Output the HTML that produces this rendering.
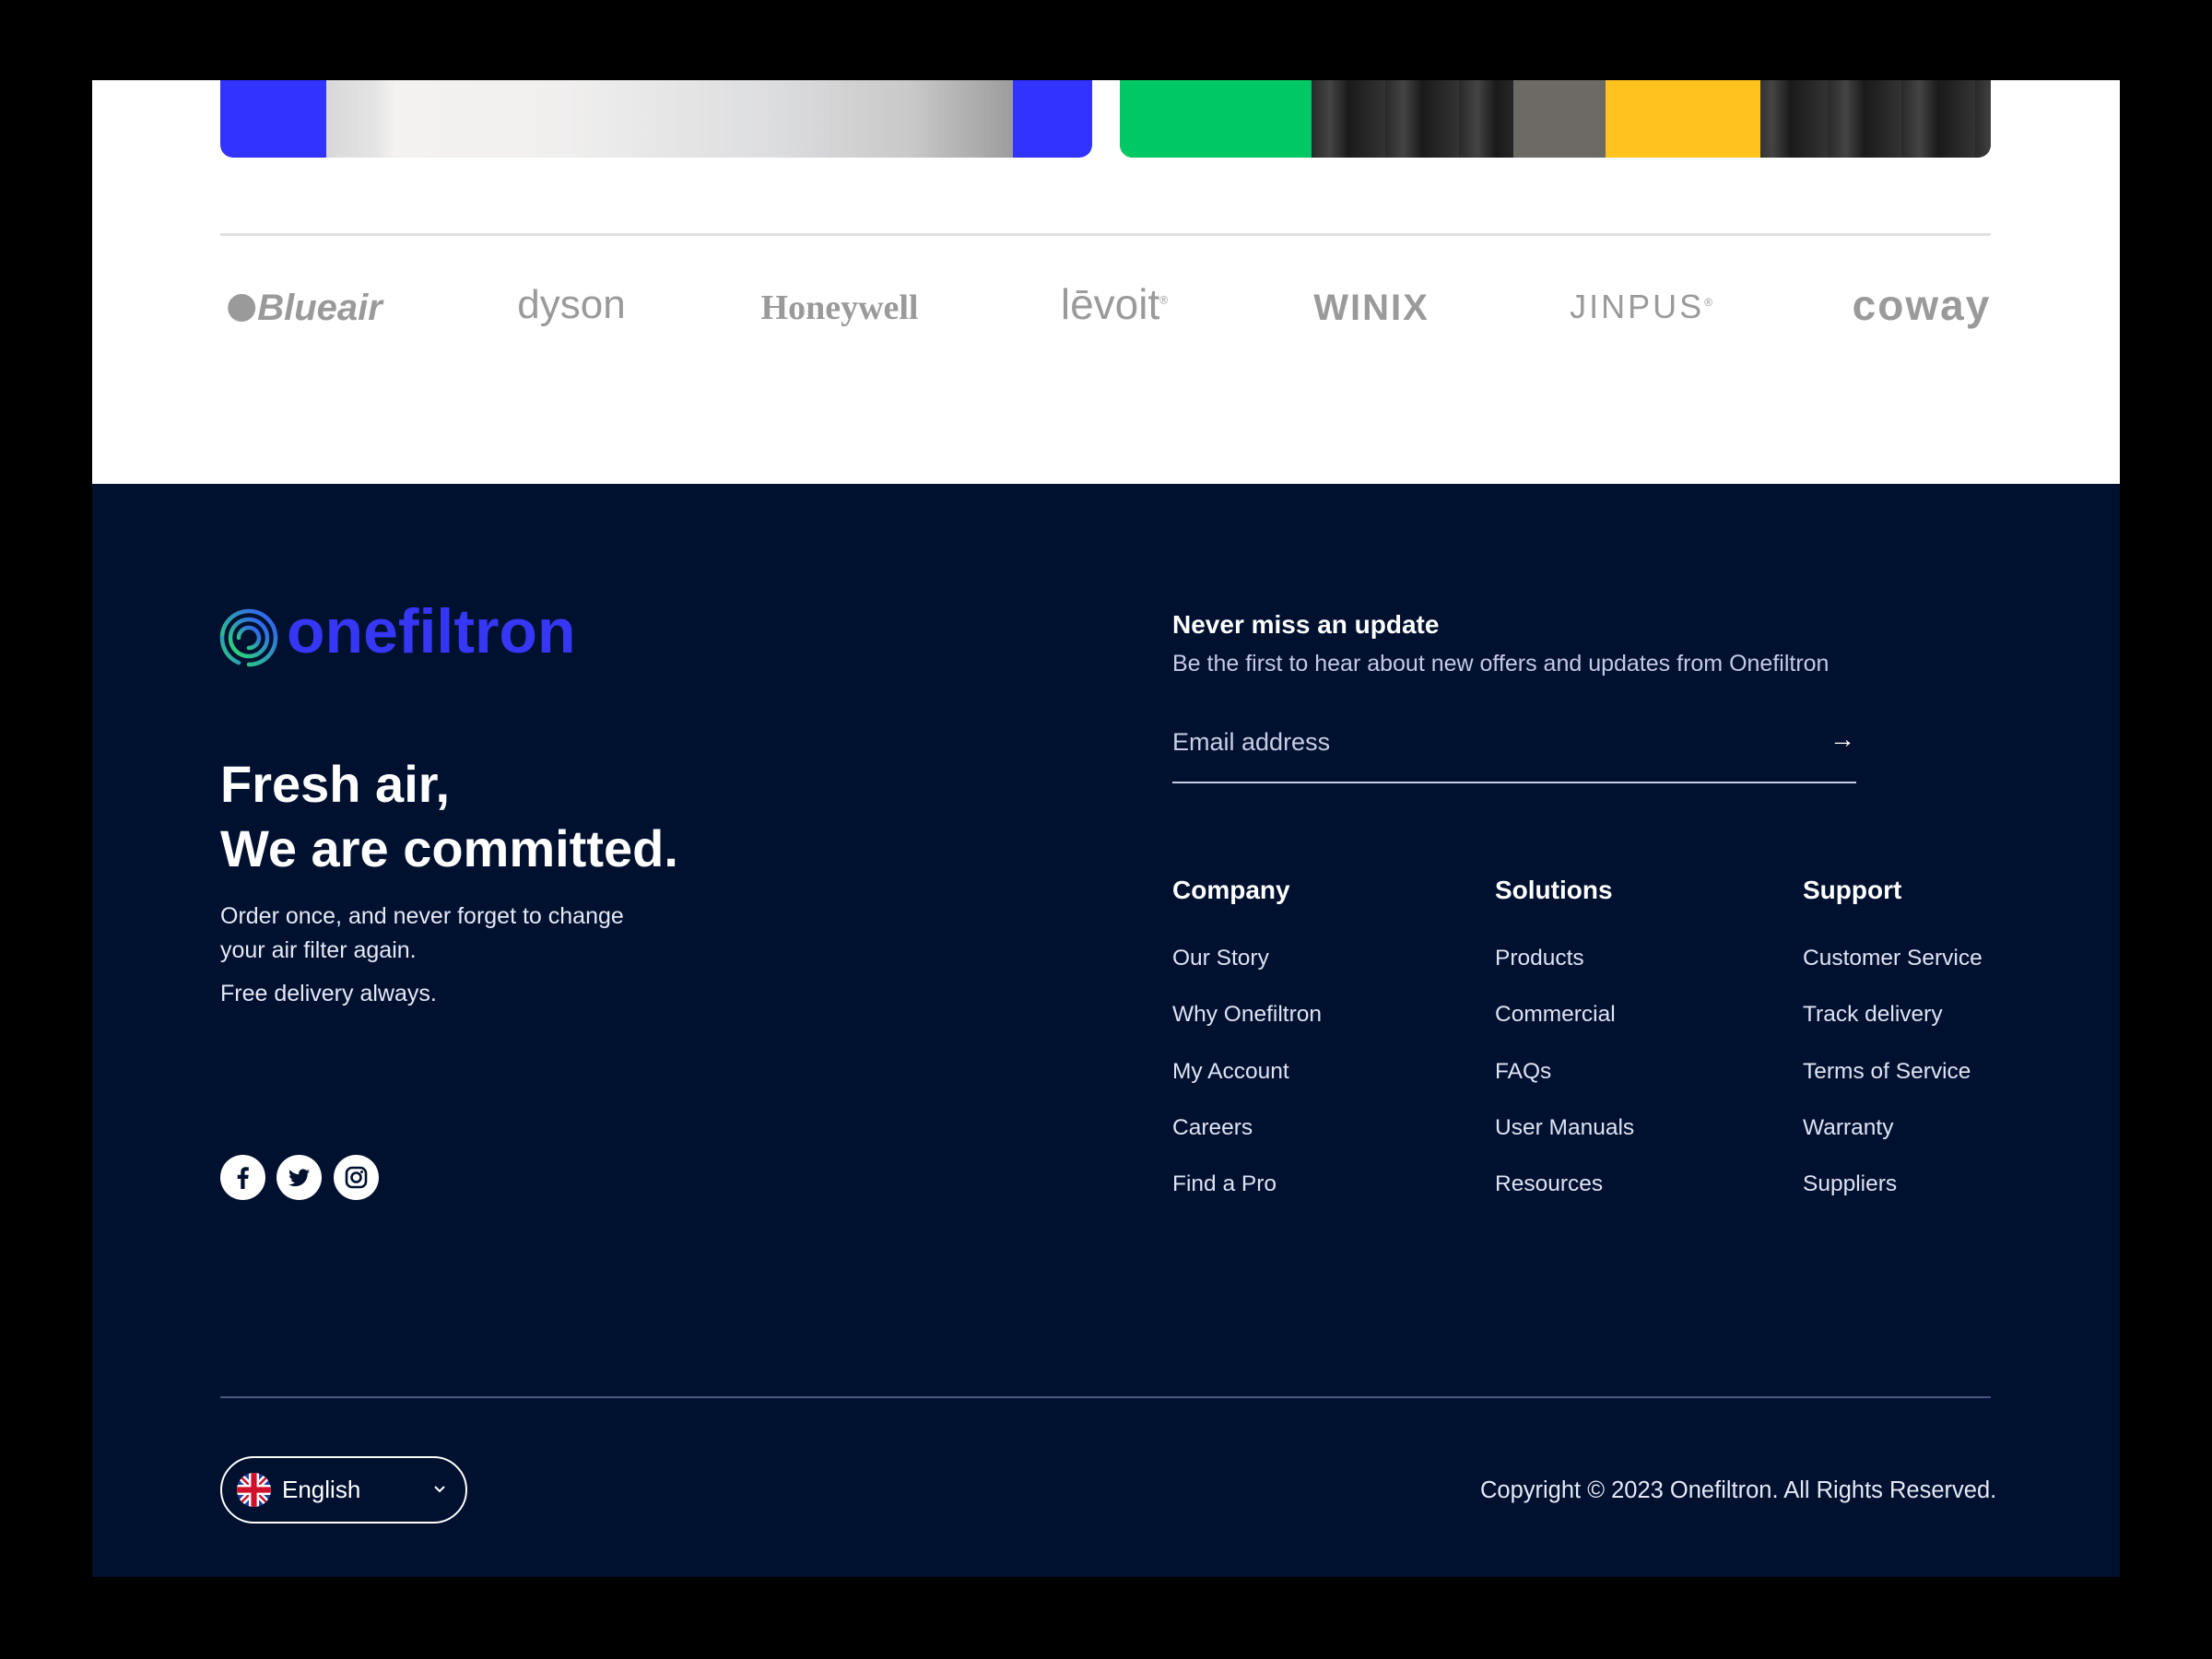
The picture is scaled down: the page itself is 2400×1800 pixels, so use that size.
<!DOCTYPE html>
<html><head><meta charset="utf-8"><style>
*{margin:0;padding:0;box-sizing:border-box}
body{width:2400px;height:1800px;background:#000;position:relative;overflow:hidden;font-family:"Liberation Sans",sans-serif}
.a{position:absolute}
.white{left:100px;top:87px;width:2200px;height:438px;background:#fff}
.foot{left:100px;top:525px;width:2200px;height:1186px;background:#00112f}
.logo{color:#9a9a9a;font-weight:bold;top:312px;font-size:40px;transform:translateX(-50%);white-space:nowrap}
.t{color:#fff;white-space:nowrap}
.lk{color:#dfe2f5;font-size:24.5px;white-space:nowrap}
.h{color:#fff;font-size:28px;font-weight:bold;white-space:nowrap}
.soc{width:49px;height:49px;border-radius:50%;background:#fff;top:1253px}
</style></head><body>
<div class="a white"></div>
<div class="a" style="left:239px;top:87px;width:946px;height:84px;background:#3333ff;border-radius:0 0 14px 14px;overflow:hidden">
 <div class="a" style="left:115px;top:0;width:745px;height:84px;background:linear-gradient(90deg,#d8d8d8 0,#e4e4e4 7%,#f4f2f0 10%,#f0efee 35%,#dcdddf 65%,#c9c9c9 85%,#9d9d9d 100%)"></div>
</div>
<div class="a" style="left:1215px;top:87px;width:945px;height:84px;background:#3a3a3a;border-radius:0 0 14px 14px;overflow:hidden">
 <div class="a" style="left:0;top:0;width:208px;height:84px;background:#00c864"></div>
 <div class="a" style="left:208px;top:0;width:737px;height:84px;background:repeating-linear-gradient(90deg,#2a2a2a 0,#444 20px,#1a1a1a 40px,#333 80px)"></div>
 <div class="a" style="left:427px;top:0;width:100px;height:84px;background:#6d6a66"></div>
 <div class="a" style="left:527px;top:0;width:168px;height:84px;background:#ffc21f"></div>
</div>
<div class="a" style="left:239px;top:253px;width:1921px;height:3px;background:#e0e0e0"></div>
<div class="a logo" style="left:331px;font-style:italic"><span style="display:inline-block;width:30px;height:30px;border-radius:50%;background:#9a9a9a;vertical-align:-2px;margin-right:2px"></span>Blueair</div>
<div class="a logo" style="left:620px;font-weight:normal;font-size:44px;top:306px">dyson</div>
<div class="a logo" style="left:911px;font-family:'Liberation Serif',serif;font-size:38px">Honeywell</div>
<div class="a logo" style="left:1209px;font-weight:normal;font-size:46px;top:303px">lēvoit<sup style="font-size:12px">®</sup></div>
<div class="a logo" style="left:1488px;font-size:40px;letter-spacing:2px">WINIX</div>
<div class="a logo" style="left:1782px;font-weight:normal;font-size:36px;letter-spacing:3px">JINPUS<sup style="font-size:12px">®</sup></div>
<div class="a logo" style="left:2085px;font-size:46px;top:304px;letter-spacing:2px">coway</div>

<div class="a foot"></div>
<svg class="a" style="left:237px;top:659px" width="66" height="66" viewBox="0 0 66 66"><defs><linearGradient id="g" x1="0" y1="1" x2="1" y2="0"><stop offset="0" stop-color="#2be36a"/><stop offset="1" stop-color="#3355ff"/></linearGradient></defs><g fill="none" stroke="url(#g)" stroke-width="4.5" stroke-linecap="round"><path d="M33 62A29 29 0 1 0 4 33"/><path d="M4 33A29 29 0 0 0 22 60"/><path d="M33 53A20 20 0 1 0 13 33A20 20 0 0 0 33 53"/><path d="M33 44A11 11 0 1 0 22 33"/></g></svg>
<div class="a" style="left:311px;top:646px;font-size:68px;font-weight:bold;color:#3636f5">onefiltron</div>
<div class="a t" style="left:239px;top:816px;font-size:56px;font-weight:bold;line-height:70px">Fresh air,<br>We are committed.</div>
<div class="a lk" style="left:239px;top:976px;line-height:37px;color:#e6e8f7;font-size:25px">Order once, and never forget to change<br>your air filter again.</div>
<div class="a lk" style="left:239px;top:1064px;color:#e6e8f7;font-size:25px">Free delivery always.</div>
<div class="a soc" style="left:239px"><svg width="49" height="49" viewBox="0 0 49 49"><path d="M26.5 37V26h3.6l.6-4.2h-4.2v-2.6c0-1.2.4-2 2.1-2h2.2v-3.8c-.4 0-1.7-.2-3.2-.2-3.2 0-5.3 1.9-5.3 5.5v3.1h-3.6V26h3.6v11z" fill="#00112f"/></svg></div>
<div class="a soc" style="left:300px"><svg width="49" height="49" viewBox="0 0 49 49"><path d="M36 17.5c-.9.4-1.8.6-2.7.8 1-.6 1.7-1.5 2-2.6-.9.6-2 1-3 1.2a4.7 4.7 0 0 0-8 4.3c-3.9-.2-7.4-2.1-9.7-4.9-1.3 2.200-.6 4.9 1.5 6.3-.8 0-1.5-.2-2.1-.6 0 2.3 1.6 4.2 3.8 4.6-.7.2-1.4.2-2.1.1.6 1.9 2.4 3.2 4.4 3.3-2 1.6-4.4 2.300-7 2 2.1 1.4 4.6 2.1 7.2 2.1 8.8 0 13.6-7.4 13.4-14 .9-.7 1.7-1.5 2.3-2.6z" fill="#00112f"/></svg></div>
<div class="a soc" style="left:362px"><svg width="49" height="49" viewBox="0 0 49 49"><rect x="14" y="14" width="21" height="21" rx="6" fill="none" stroke="#00112f" stroke-width="2.6"/><circle cx="24.5" cy="24.5" r="5" fill="none" stroke="#00112f" stroke-width="2.6"/><circle cx="30.5" cy="18.5" r="1.5" fill="#00112f"/></svg></div>
<div class="a h" style="left:1272px;top:662px">Never miss an update</div>
<div class="a lk" style="left:1272px;top:706px;color:#c5c9e6;font-size:25px">Be the first to hear about new offers and updates from Onefiltron</div>
<div class="a" style="left:1272px;top:790px;font-size:27px;color:#c9cde6">Email address</div>
<div class="a" style="left:1985px;top:786px;font-size:28px;color:#fff">→</div>
<div class="a" style="left:1272px;top:848px;width:742px;height:2px;background:#c9cde6"></div>
<div class="a h" style="left:1272px;top:950px">Company</div>
<div class="a h" style="left:1622px;top:950px">Solutions</div>
<div class="a h" style="left:1956px;top:950px">Support</div>
<div class="a lk" style="left:1272px;top:1009px;line-height:61.3px">Our Story<br>Why Onefiltron<br>My Account<br>Careers<br>Find a Pro</div>
<div class="a lk" style="left:1622px;top:1009px;line-height:61.3px">Products<br>Commercial<br>FAQs<br>User Manuals<br>Resources</div>
<div class="a lk" style="left:1956px;top:1009px;line-height:61.3px">Customer Service<br>Track delivery<br>Terms of Service<br>Warranty<br>Suppliers</div>
<div class="a" style="left:239px;top:1515px;width:1921px;height:2px;background:#4c5680"></div>
<div class="a" style="left:239px;top:1580px;width:268px;height:73px;border:2px solid #fff;border-radius:37px"></div>
<svg class="a" style="left:257px;top:1598px" width="37" height="37" viewBox="0 0 60 60"><defs><clipPath id="c"><circle cx="30" cy="30" r="30"/></clipPath></defs><g clip-path="url(#c)"><rect width="60" height="60" fill="#1f3fa8"/><path d="M0 0L60 60M60 0L0 60" stroke="#fff" stroke-width="12"/><path d="M0 0L60 60M60 0L0 60" stroke="#d0112b" stroke-width="4"/><path d="M30 0V60M0 30H60" stroke="#fff" stroke-width="18"/><path d="M30 0V60M0 30H60" stroke="#d0112b" stroke-width="10"/></g></svg>
<div class="a t" style="left:306px;top:1601px;font-size:26px">English</div>
<svg class="a" style="left:470px;top:1611px" width="14" height="10" viewBox="0 0 14 10"><path d="M2 2l5 5 5-5" fill="none" stroke="#fff" stroke-width="2"/></svg>
<div class="a lk" style="left:1606px;top:1603px;color:#e6e8f7;font-size:25.5px">Copyright © 2023 Onefiltron. All Rights Reserved.</div>
</body></html>
